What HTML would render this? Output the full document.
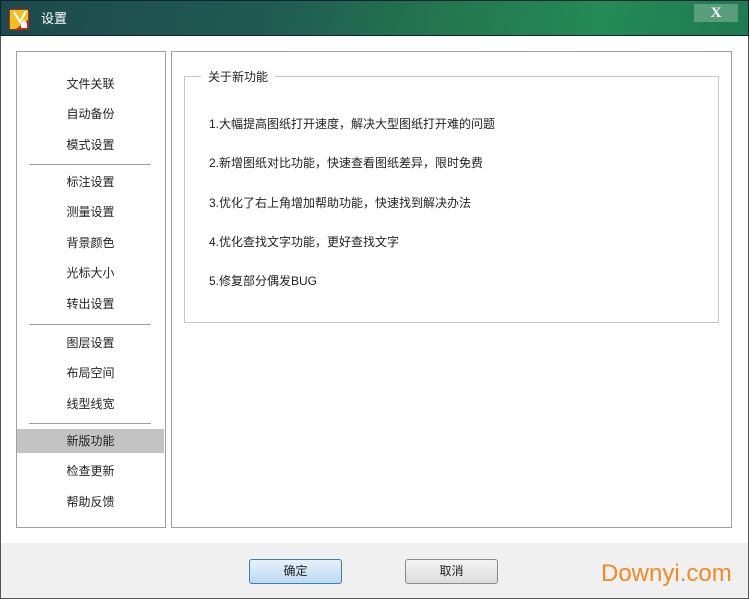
<!DOCTYPE html>
<html><head><meta charset="utf-8"><style>
*{margin:0;padding:0;box-sizing:border-box}
body{width:749px;height:599px;overflow:hidden;position:relative;background:#fff;font-family:"Liberation Sans","Noto Sans CJK SC","Microsoft YaHei",sans-serif;font-size:12px;color:#222}
.tb{position:absolute;left:0;top:0;width:749px;height:36px;background:linear-gradient(100deg,#1d4a4c 0%,#1f5a52 35%,#23784f 60%,#238a55 80%,#1f7a50 100%);border:1px solid #123}
.tb .t{position:absolute;left:40px;top:7px;color:#fff;font-size:13px}
.x{position:absolute;left:693px;top:3px;width:44px;height:18px;background:rgba(255,255,255,.25);color:#fff;font-weight:bold;text-align:center;font-size:15px;line-height:18px;font-family:"Liberation Serif",serif}
.win{position:absolute;left:0;top:36px;width:749px;height:563px;border-left:1px solid #555;border-right:1px solid #555;border-bottom:1px solid #555}
.foot{position:absolute;left:1px;top:543px;width:747px;height:55px;background:#f0f0f0}
.lp{position:absolute;left:16px;top:51px;width:150px;height:477px;border:1px solid #a0a0a0}
.rp{position:absolute;left:171px;top:51px;width:561px;height:477px;border:1px solid #a0a0a0}
.it{position:absolute;left:17px;width:147px;text-align:center;height:24px;line-height:24px}
.sep{position:absolute;left:29px;width:122px;height:1px;background:#a0a0a0}
.gb{position:absolute;left:184px;top:76px;width:535px;height:247px;border:1px solid #c8c8c8}
.lg{position:absolute;left:201px;top:68px;background:#fff;padding:0 7px}
.ln{position:absolute;left:209px}
.btn{position:absolute;top:559px;width:93px;height:25px;border:1px solid #8a8a8a;border-radius:3px;text-align:center;line-height:23px;background:linear-gradient(#f4f4f4,#dcdcdc)}
.b1{left:249px;border-color:#3c7fb1;background:linear-gradient(#e6f2fb,#bcd9ef)}
.wm{position:absolute;left:601px;top:560px;color:#f08a24;font-size:24px}
</style></head><body>
<div class="tb">
<svg style="position:absolute;left:7px;top:7px" width="22" height="23" viewBox="0 0 22 23"><rect x="1" y="1" width="20" height="21" rx="3" fill="#c0281e"/><path d="M2 2h18v10L8 21H2z" fill="#f0c020"/><path d="M6 4l6 10 6-11" stroke="#fff" stroke-width="2" fill="none"/><path d="M13 15l3-3 3 3v5h-6z" fill="#fff"/></svg>
<div class="t">设置</div><div class="x">X</div></div>
<div class="win"></div>
<div class="foot"></div>
<div class="lp"></div><div class="rp"></div>
<div class="it" style="top:72px">文件关联</div>
<div class="it" style="top:102px">自动备份</div>
<div class="it" style="top:133px">模式设置</div>
<div class="sep" style="top:164px"></div>
<div class="it" style="top:170px">标注设置</div>
<div class="it" style="top:200px">测量设置</div>
<div class="it" style="top:231px">背景颜色</div>
<div class="it" style="top:261px">光标大小</div>
<div class="it" style="top:292px">转出设置</div>
<div class="sep" style="top:324px"></div>
<div class="it" style="top:331px">图层设置</div>
<div class="it" style="top:361px">布局空间</div>
<div class="it" style="top:392px">线型线宽</div>
<div class="sep" style="top:423px"></div>
<div class="it" style="top:429px;background:#c3c3c3">新版功能</div>
<div class="it" style="top:459px">检查更新</div>
<div class="it" style="top:490px">帮助反馈</div>
<div class="gb"></div><div class="lg" style="top:68px">关于新功能</div>
<div class="ln" style="top:115px">1.大幅提高图纸打开速度，解决大型图纸打开难的问题</div>
<div class="ln" style="top:154px">2.新增图纸对比功能，快速查看图纸差异，限时免费</div>
<div class="ln" style="top:194px">3.优化了右上角增加帮助功能，快速找到解决办法</div>
<div class="ln" style="top:233px">4.优化查找文字功能，更好查找文字</div>
<div class="ln" style="top:272px">5.修复部分偶发BUG</div>
<div class="btn b1">确定</div><div class="btn" style="left:405px">取消</div>
<div class="wm">Downyi.com</div>
</body></html>
